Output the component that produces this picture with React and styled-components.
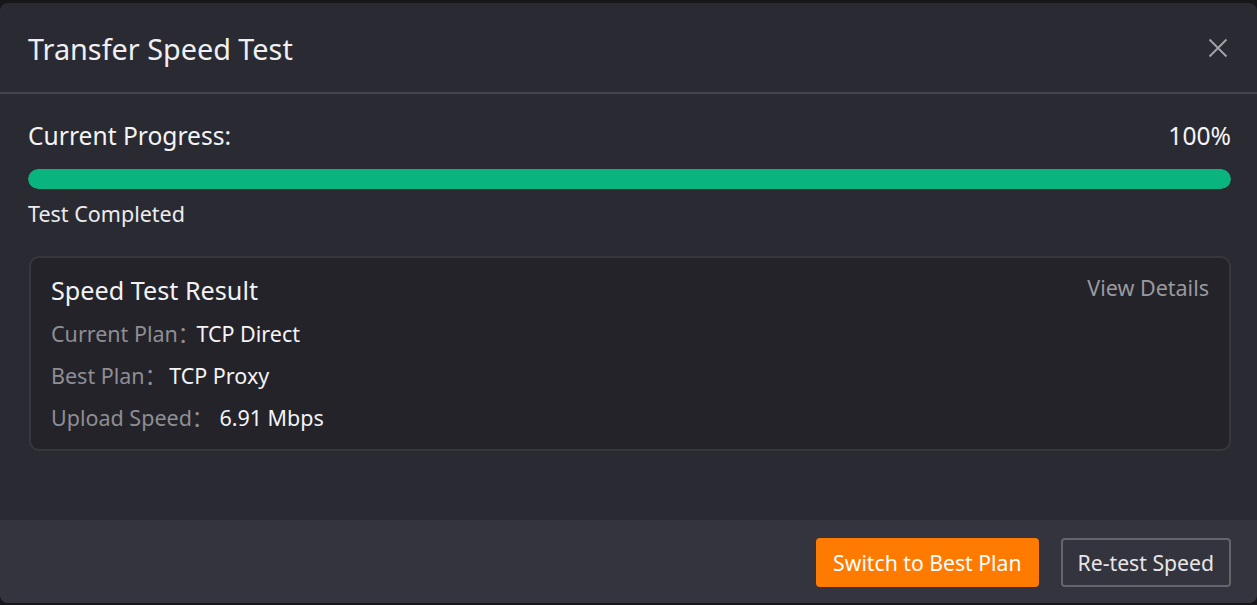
import React from "react";
import styled, { createGlobalStyle } from "styled-components";

const Global = createGlobalStyle`
  html, body { margin: 0; padding: 0; background: #17171b; }
  body { font-family: "Noto Sans", "Open Sans", "Noto Sans CJK SC", sans-serif; }
  * { box-sizing: border-box; }
`;

const Page = styled.div`
  width: 1257px;
  height: 605px;
  padding-top: 3px;
  background: #17171b;
`;

const Modal = styled.div`
  height: 600px;
  background: #2a2a33;
  border-radius: 8px;
  display: flex;
  flex-direction: column;
  overflow: hidden;
`;

const Header = styled.div`
  height: 91px;
  display: flex;
  align-items: center;
  justify-content: space-between;
  padding: 1px 28px 0 28px;
  border-bottom: 2px solid #45454c;
`;

const Title = styled.h1`
  margin: 0;
  font-size: 28.8px;
  font-weight: 400;
  color: #f0f0f2;
`;

const CloseBtn = styled.button`
  background: none;
  border: none;
  padding: 0;
  width: 22px;
  height: 22px;
  display: flex;
  align-items: center;
  justify-content: center;
  color: #a4a4aa;
  cursor: pointer;
`;

const Body = styled.div`
  flex: 1;
  padding: 24px 26px 0 28px;
  display: flex;
  flex-direction: column;
`;

const ProgressHead = styled.div`
  display: flex;
  justify-content: space-between;
  align-items: center;
  font-size: 24.6px;
  color: #f4f4f6;
  height: 34px;
`;

const Track = styled.div`
  margin-top: 17px;
  height: 20px;
  border-radius: 10px;
  background: #3a3a44;
  overflow: hidden;
`;

const Fill = styled.div`
  height: 100%;
  border-radius: 10px;
  background: #0ab47e;
`;

const Status = styled.div`
  margin-top: 10px;
  font-size: 21.5px;
  color: #ececef;
`;

const Card = styled.div`
  margin-top: 28px;
  margin-left: 1px;
  border: 2px solid #37373e;
  border-radius: 10px;
  background: #232329;
  padding: 15px 20px 15px 20px;
  display: flex;
  flex-direction: column;
`;

const CardHead = styled.div`
  display: flex;
  justify-content: space-between;
  align-items: center;
`;

const CardTitle = styled.div`
  font-size: 25.2px;
  color: #f2f2f4;
`;

const Link = styled.a`
  font-size: 21.5px;
  color: #9a9aa0;
  cursor: pointer;
  align-self: flex-start;
`;

const Row = styled.div`
  margin-top: ${p => (p.$first ? "11px" : "10px")};
  font-size: 21.5px;
  line-height: 32px;
  display: flex;
`;

const Label = styled.span`
  color: #8e8e94;
  margin-right: ${p => p.$gap}px;
`;

const Value = styled.span`
  color: #f4f4f6;
`;

const Footer = styled.div`
  height: 83px;
  background: #34343e;
  display: flex;
  align-items: center;
  justify-content: flex-end;
  gap: 22px;
  padding: 1px 26px 0 0;
`;

const Button = styled.button`
  height: 49px;
  padding: 0 15px;
  border-radius: 4px;
  font-family: inherit;
  font-size: 21.2px;
  cursor: pointer;
  border: 2px solid ${p => (p.$primary ? "#ff7a00" : "#64646b")};
  background: ${p => (p.$primary ? "#ff7a00" : "transparent")};
  color: ${p => (p.$primary ? "#ffffff" : "#e6e6e8")};
`;

const rows = [
  { label: "Current Plan：", value: "TCP Direct", gap: -3 },
  { label: "Best Plan：", value: "TCP Proxy", gap: 3 },
  { label: "Upload Speed：", value: "6.91 Mbps", gap: 6 },
];

export default function App() {
  return (
    <>
      <Global />
      <Page>
        <Modal>
          <Header>
            <Title>Transfer Speed Test</Title>
            <CloseBtn aria-label="close">
              <svg width="20" height="20" viewBox="0 0 20 20">
                <path d="M1.5 1.5 L18.5 18.5 M18.5 1.5 L1.5 18.5" stroke="currentColor" strokeWidth="1.8" />
              </svg>
            </CloseBtn>
          </Header>
          <Body>
            <ProgressHead>
              <span>Current Progress:</span>
              <span>100%</span>
            </ProgressHead>
            <Track>
              <Fill style={{ width: "100%" }} />
            </Track>
            <Status>Test Completed</Status>
            <Card>
              <CardHead>
                <CardTitle>Speed Test Result</CardTitle>
                <Link>View Details</Link>
              </CardHead>
              {rows.map((r, i) => (
                <Row key={r.label} $first={i === 0}>
                  <Label $gap={r.gap}>{r.label}</Label>
                  <Value>{r.value}</Value>
                </Row>
              ))}
            </Card>
          </Body>
          <Footer>
            <Button $primary>Switch to Best Plan</Button>
            <Button>Re-test Speed</Button>
          </Footer>
        </Modal>
      </Page>
    </>
  );
}
